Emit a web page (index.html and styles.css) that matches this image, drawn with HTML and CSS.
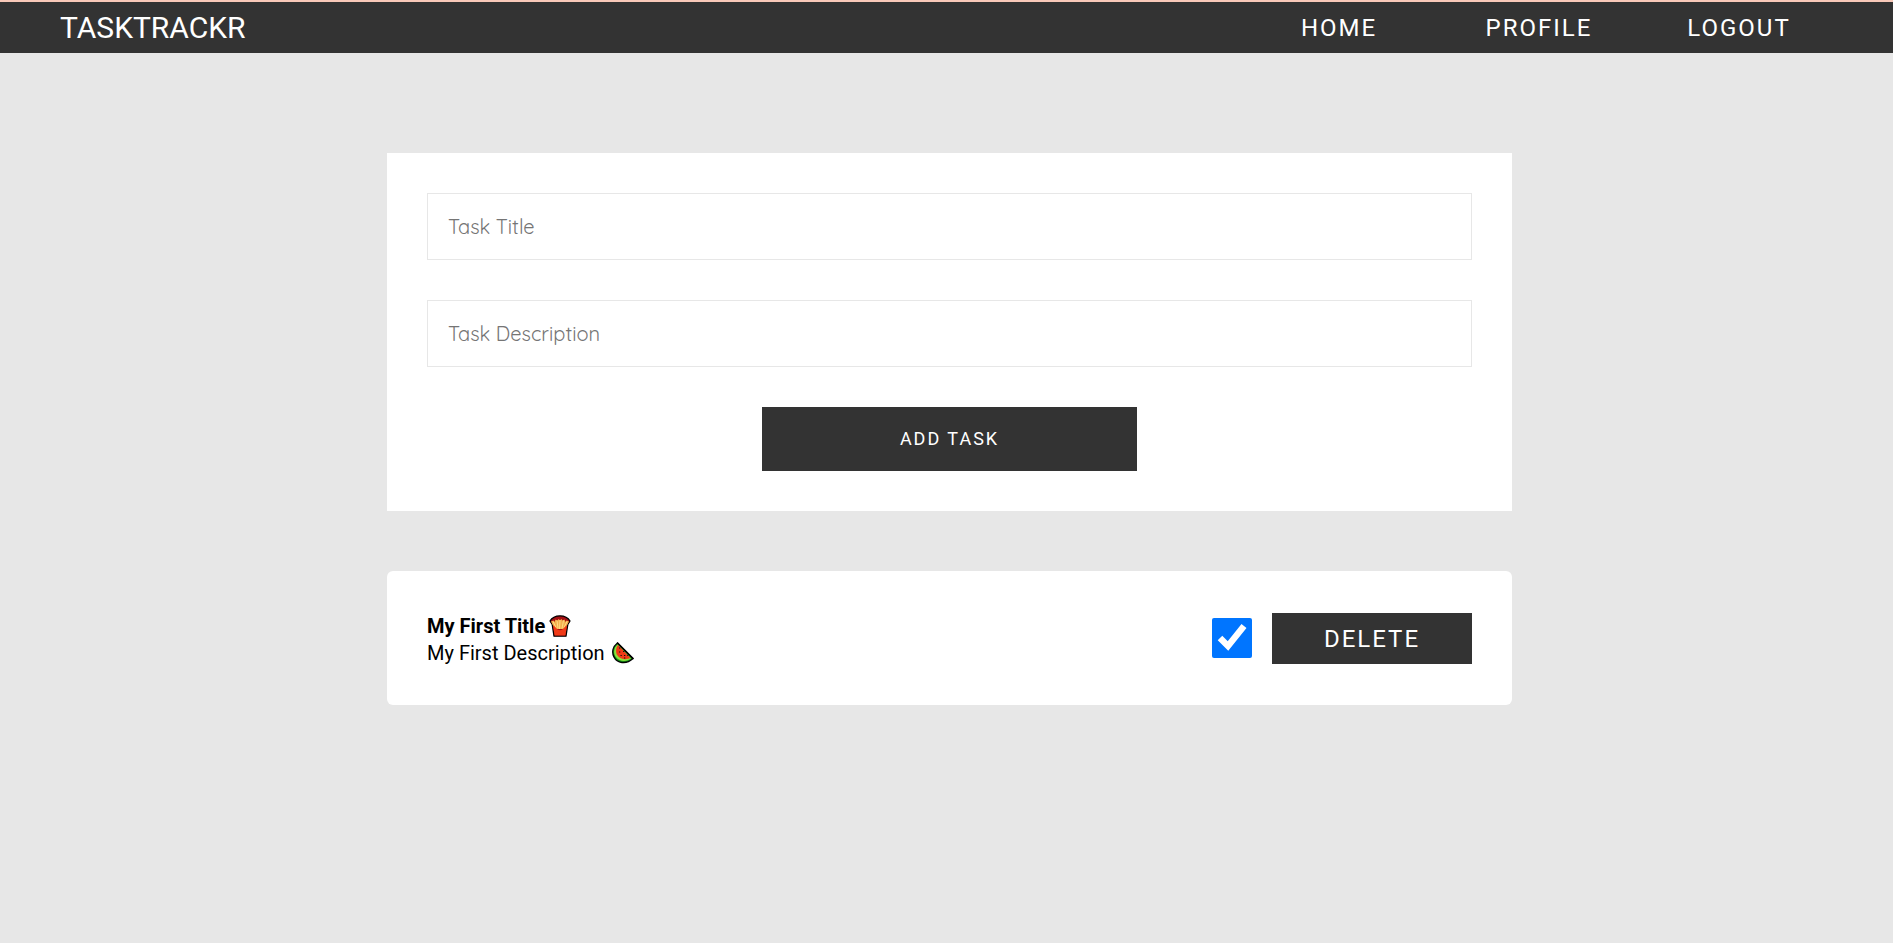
FILE: index.html
```
<!DOCTYPE html>
<html lang="en">
<head>
  <meta charset="utf-8">
  <title>TaskTrackr</title>
  <link rel="stylesheet" href="styles.css">
</head>
<body>
  <header class="header">
    <h1 class="brand">TASKTRACKR</h1>
    <nav class="nav">
      <a class="nav-link" href="#home">HOME</a>
      <a class="nav-link" href="#profile">PROFILE</a>
      <a class="nav-link" href="#logout">LOGOUT</a>
    </nav>
  </header>
  <main class="main">
    <form class="task-form">
      <input class="field" type="text" name="title" placeholder="Task Title" aria-label="Task Title">
      <input class="field" type="text" name="description" placeholder="Task Description" aria-label="Task Description">
      <button class="button add-button" type="button">ADD TASK</button>
    </form>
    <article class="task">
      <div class="task-text">
        <h2 class="task-title"><span>My First Title</span>
          <svg class="emoji" viewBox="0 0 22 22" aria-hidden="true">
            <path d="M1 6C3 2.500 7 .8 11 .8S19 2.500 21 6L18.800 9.500 17 21.200H5L3.200 9.500Z" fill="#a50f12" stroke="#000" stroke-width="1.300" stroke-linejoin="round"/>
            <path d="M2 6.500L4.500 5.500 5.500 7 6.500 4.500 8.500 5.500 9.500 4 11 5.200 12.500 4 13.500 5.500 15.500 4.500 16.500 7 17.500 5.500 20 6.500 18.200 10 15 14H7L3.700 10Z" fill="#f3b04e"/>
            <path d="M4 6.500l3 6M8 5.500l1 8M11 5l-.5 9M14.500 5.500l-1.500 8M18 6.500l-3 6" stroke="#ffdb83" stroke-width="1" fill="none"/>
            <path d="M4 10.500Q6 11 7 13Q11 17.500 15 13Q16 11 18 10.500L16.400 20.500H5.600Z" fill="#f03a17"/>
          </svg>
        </h2>
        <p class="task-description"><span>My First Description</span>
          <svg class="emoji emoji-spaced" viewBox="0 0 22 22" aria-hidden="true">
            <path d="M5.500 1C1 4.500-.5 10 2 15c3 6 12 8 19 1.500Z" fill="#16a018" stroke="#000" stroke-width="1.500" stroke-linejoin="round"/>
            <path d="M5.500 2.500C1.800 6 1.200 11 3.500 14.500c3.500 5 10.500 6 15.500 2Z" fill="#8be03c"/>
            <path d="M6 3C3.500 6 3.500 11 5.500 13.500c3 4 8.500 4.500 13 2.500Z" fill="#f03a17"/>
            <path d="M7 6h1.300M7 10h1.300M11 9.500h1.300M8.500 13.500h1.300M12 13.500h1.300M15 13.300h1.300M12 16h1.300" stroke="#111" stroke-width="1"/>
            <path d="M5.500 1L21 16.500" stroke="#000" stroke-width="1.300" stroke-linecap="round"/>
          </svg>
        </p>
      </div>
      <div class="task-actions">
        <input class="task-check" type="checkbox" checked aria-label="Completed">
        <button class="button delete-button" type="button">DELETE</button>
      </div>
    </article>
  </main>
</body>
</html>
```
FILE: styles.css
```
* {
  box-sizing: border-box;
  margin: 0;
  padding: 0;
}

body {
  min-height: 100vh;
  background: #e7e7e7;
  color: #000;
  font-family: Roboto, sans-serif;
  font-size: 20px;
}

.header {
  display: flex;
  justify-content: space-between;
  align-items: center;
  padding: 0 54px 0 60px;
  border-top: 2px solid #f9c9b9;
  background: #333;
  color: #fff;
}

.brand {
  font-size: 30px;
  font-weight: 400;
  line-height: 51px;
}

.nav {
  display: flex;
}

.nav-link {
  width: 200px;
  padding-top: 2px;
  color: #fff;
  font-size: 24px;
  letter-spacing: 2px;
  line-height: 49px;
  text-align: center;
  text-decoration: none;
}

.main {
  display: flex;
  flex-direction: column;
  align-items: center;
  gap: 60px;
  padding: 100px 0 0 6px;
}

.task-form,
.task {
  width: 1125px;
  max-width: 100%;
  padding: 40px;
  background: #fff;
}

.task-form {
  display: flex;
  flex-direction: column;
  align-items: center;
  gap: 40px;
}

.field {
  width: 100%;
  height: 67px;
  padding: 0 20px;
  border: 1px solid #e7e7e7;
  background: #fff;
  font-family: Quicksand, Lato, sans-serif;
  font-size: 20px;
  font-weight: 400;
}

.field::placeholder {
  color: #757575;
}

.button {
  border: none;
  background: #333;
  color: #fff;
  font-family: Roboto, sans-serif;
  letter-spacing: 2px;
  text-align: center;
}

.add-button {
  width: 375px;
  height: 64px;
  padding-bottom: 2px;
  font-size: 18px;
}

.task {
  display: flex;
  justify-content: space-between;
  align-items: flex-start;
  padding: 42px 40px 38px;
  border-radius: 6px;
}

.task-title,
.task-description {
  display: flex;
  align-items: center;
  font-size: 20px;
  line-height: 27px;
}

.emoji {
  width: 22px;
  height: 22px;
  margin: 0 0 2px 4px;
}

.emoji-spaced {
  margin-left: 7px;
}

.task-actions {
  display: flex;
  align-items: flex-start;
  gap: 20px;
}

.task-check {
  width: 40px;
  height: 40px;
  margin-top: 5px;
}

.delete-button {
  width: 200px;
  height: 51px;
  font-size: 24px;
}
```
